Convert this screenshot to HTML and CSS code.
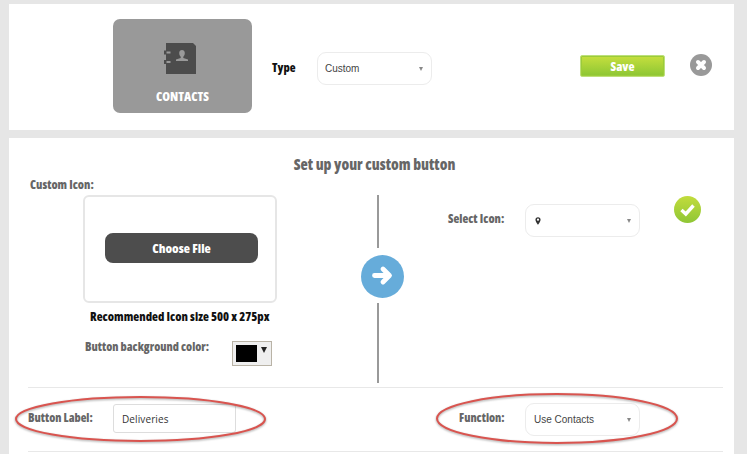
FILE: index.html
```html
<!DOCTYPE html>
<html lang="en">
<head>
<meta charset="utf-8">
<title>Set up your custom button</title>
<link rel="stylesheet" href="styles.css">
</head>
<body>
<div class="page">
  <section class="panel top">
    <div class="tile">
      <svg class="tile-icon" width="32" height="31" viewBox="0 0 32 31">
        <path d="M2 0H29L32 3V31H2Z" fill="#4c4c4c"/>
        <path d="M0 7.500H6V11.500H0ZM0 17H6V21H0Z" fill="#4c4c4c"/>
        <path d="M2.500 8.500H6.500V10.500H2.500ZM2.500 18H6.500V20H2.500Z" fill="#999"/>
        <path d="M15.200 10c0-2 1.200-3 2.800-3s2.800 1 2.800 3c0 1.600-.7 3-1.500 3.700v1.300l4.700 1.500V18H12v-1.500l4.700-1.500v-1.300c-.8-.7-1.500-2.100-1.500-3.700Z" fill="#999"/>
      </svg>
      <span class="tile-label">CONTACTS</span>
    </div>
    <span class="type-label">Type</span>
    <div class="select type-select"><span>Custom</span><i class="caret"></i></div>
    <button class="save">Save</button>
    <svg class="close" width="22" height="22" viewBox="0 0 22 22">
      <circle cx="11" cy="11" r="11" fill="#999"/>
      <path d="M8 8L14 14M14 8L8 14" stroke="#fff" stroke-width="4" stroke-linecap="round"/>
    </svg>
  </section>

  <section class="panel setup">
    <h2 class="heading">Set up your custom button</h2>
    <div class="columns">
      <div class="col-left">
        <div class="label custom-label">Custom Icon:</div>
        <div class="upload"><button class="choose">Choose File</button></div>
        <div class="hint">Recommended Icon size 500 x 275px</div>
        <div class="bg-row">
          <span class="label bg-label">Button background color:</span>
          <div class="swatch"><b></b><i></i></div>
        </div>
      </div>
      <div class="divider">
        <div class="line seg-top"></div>
        <svg class="arrow" width="43" height="43" viewBox="0 0 43 43">
          <circle cx="21.500" cy="21.500" r="21.500" fill="#66acda"/>
          <path d="M13.500 20.500H27M22 14L28.500 20.500L22 27" fill="none" stroke="#fff" stroke-width="4.800" stroke-linecap="round" stroke-linejoin="round"/>
        </svg>
        <div class="line seg-bottom"></div>
      </div>
      <div class="col-right">
        <span class="label icon-label">Select Icon:</span>
        <div class="select icon-select">
          <svg width="6" height="8" viewBox="0 0 7 9"><path fill-rule="evenodd" d="M3.500 0a3 3 0 0 1 3 3c0 2-3 6-3 6s-3-4-3-6a3 3 0 0 1 3-3Zm0 1.700a1.300 1.300 0 1 0 0 2.600a1.300 1.300 0 0 0 0-2.600Z" fill="#333"/></svg>
          <i class="caret"></i>
        </div>
        <svg class="check" width="27" height="27" viewBox="0 0 27 27">
          <defs><linearGradient id="g" x1="0" y1="0" x2="0" y2="1"><stop offset="0" stop-color="#c2dc3c"/><stop offset="1" stop-color="#8fc636"/></linearGradient></defs>
          <circle cx="13.500" cy="13.500" r="13.500" fill="url(#g)"/>
          <path d="M7.500 14L11.800 18L19.500 9.500" fill="none" stroke="#fff" stroke-width="3.400"/>
        </svg>
      </div>
    </div>
    <div class="fields">
      <span class="label name-label">Button Label:</span>
      <div class="input">Deliveries</div>
      <span class="label fn-label">Function:</span>
      <div class="select fn-select"><span>Use Contacts</span><i class="caret"></i></div>
      <svg class="oval oval-left" width="260" height="54" viewBox="0 0 260 54"><ellipse cx="127.500" cy="25" rx="124.500" ry="22"/></svg>
      <svg class="oval oval-right" width="250" height="58" viewBox="0 0 250 58"><ellipse cx="124" cy="26.500" rx="120" ry="24.500"/></svg>
    </div>
  </section>
</div>
</body>
</html>
```
FILE: styles.css
```css
* { box-sizing: border-box; }
html, body { margin: 0; background: #fff; }
body { font-family: "Liberation Sans", Arial, sans-serif; overflow: hidden; }
.page { width: 747px; height: 454px; background: #e6e6e6; padding: 4px 13px 0 9px; overflow: hidden; }
.panel { background: #fff; }
.top { height: 126px; margin-bottom: 8px; display: flex; align-items: flex-start; padding-left: 104px; }
.tile { width: 139px; height: 94px; margin-top: 15px; background: #999; border-radius: 7px; display: flex; flex-direction: column; align-items: center; }
.tile-icon { margin-top: 24px; margin-left: -5px; flex-shrink: 0; }
.tile-label, .type-label, .save, .heading, .label, .choose, .hint {
  font-family: "Open Sans", "Liberation Sans", sans-serif; font-weight: 800; font-stretch: 75%;
  white-space: nowrap;
}
.tile-label { color: #fff; font-size: 12.500px; line-height: 16px; margin-top: 15px; }
.type-label { width: 24px; flex-shrink: 0; color: #111; font-size: 12px; line-height: 16px; margin: 56px 0 0 20px; }
.select { width: 115px; height: 33px; flex-shrink: 0; border: 1px solid #ececec; border-radius: 9px; background: #fff; display: flex; align-items: center; justify-content: space-between; padding: 0 8px 0 7px; font-size: 10px; color: #444; }
.type-select { margin: 48px 0 0 21px; }
.caret { width: 0; height: 0; border: 2.500px solid transparent; border-top: 4px solid #888; border-bottom: 0; }
.save { width: 85px; height: 22px; margin: 51px 0 0 148px; padding: 0; border: 1px solid #bde07a; border-radius: 2px; outline: 0; color: #fff; font-size: 12.500px; background: linear-gradient(#c6df3e, #8cc634); box-shadow: inset 0 0 0 1px #9ccb3a; }
.close { margin: 50px 0 0 25px; }
.setup { height: 316px; padding: 0 11px 0 19px; position: relative; }
.heading { margin: 0; height: 38px; padding: 17px 2px 0 0; text-align: center; font-size: 15px; line-height: 18px; color: #666; }
.label { color: #666; font-size: 12px; line-height: 14px; }
.columns { height: 212px; display: flex; border-bottom: 1px solid #e8e8e8; }
.col-left { width: 349px; flex-shrink: 0; }
.custom-label { margin: 2px 0 0 2px; }
.upload { width: 194px; height: 108px; margin: 3px 0 0 55px; border: 2px solid #e6e6e6; border-radius: 6px; padding: 36px 20px 0; }
.choose { display: block; width: 153px; height: 30px; border: 0; border-radius: 8px; background: #4d4d4d; color: #fff; font-size: 12.800px; padding: 0; }
.hint { margin: 7px 0 0 62px; font-size: 12.200px; line-height: 14px; color: #111; }
.bg-row { display: flex; align-items: flex-start; margin: 15px 0 0 57px; }
.bg-label { width: 124px; flex-shrink: 0; font-size: 11.800px; }
.swatch { width: 40px; height: 25px; margin: 2px 0 0 23px; background: #efefef; border: 1px solid #b9b3a6; display: flex; padding: 3px; gap: 4px; }
.swatch b { width: 21px; height: 17px; background: #000; }
.swatch i { width: 0; height: 0; margin-top: 2px; border: 3.500px solid transparent; border-top: 6px solid #222; border-bottom: 0; }
.divider { width: 2px; flex-shrink: 0; display: flex; flex-direction: column; align-items: flex-start; padding-top: 19px; }
.line { width: 2px; background: #999; flex-shrink: 0; }
.seg-top { height: 53px; }
.seg-bottom { height: 80px; }
.arrow { flex-shrink: 0; margin: 7px 0 5px -16px; }
.col-right { display: flex; align-items: flex-start; padding-left: 69px; }
.icon-label { width: 56px; flex-shrink: 0; margin-top: 36px; }
.icon-select { margin: 28px 0 0 21px; padding-left: 9px; }
.check { margin: 20px 0 0 34px; flex-shrink: 0; }
.fields { position: relative; height: 64px; border-bottom: 1px solid #e8e8e8; display: flex; align-items: flex-start; }
.name-label { width: 65px; flex-shrink: 0; margin-top: 22px; font-size: 11.800px; }
.input { width: 123px; height: 29px; margin: 16px 0 0 20px; border: 1px solid #ddd; border-radius: 3px; padding-left: 8px; font: 10px/29px "Open Sans", sans-serif; letter-spacing: .1px; color: #333; }
.fn-label { width: 45px; flex-shrink: 0; margin: 22px 0 0 223px; font-size: 11.800px; }
.fn-select { margin: 15px 0 0 21px; padding-left: 8px; }
.oval { position: absolute; overflow: visible; pointer-events: none; }
.oval ellipse { fill: none; stroke: #d9544f; stroke-width: 2; filter: drop-shadow(0 1px 1px rgba(0,0,0,.35)); }
.oval-left { left: -15px; top: 6px; }
.oval-right { left: 405px; top: 4px; }
```
